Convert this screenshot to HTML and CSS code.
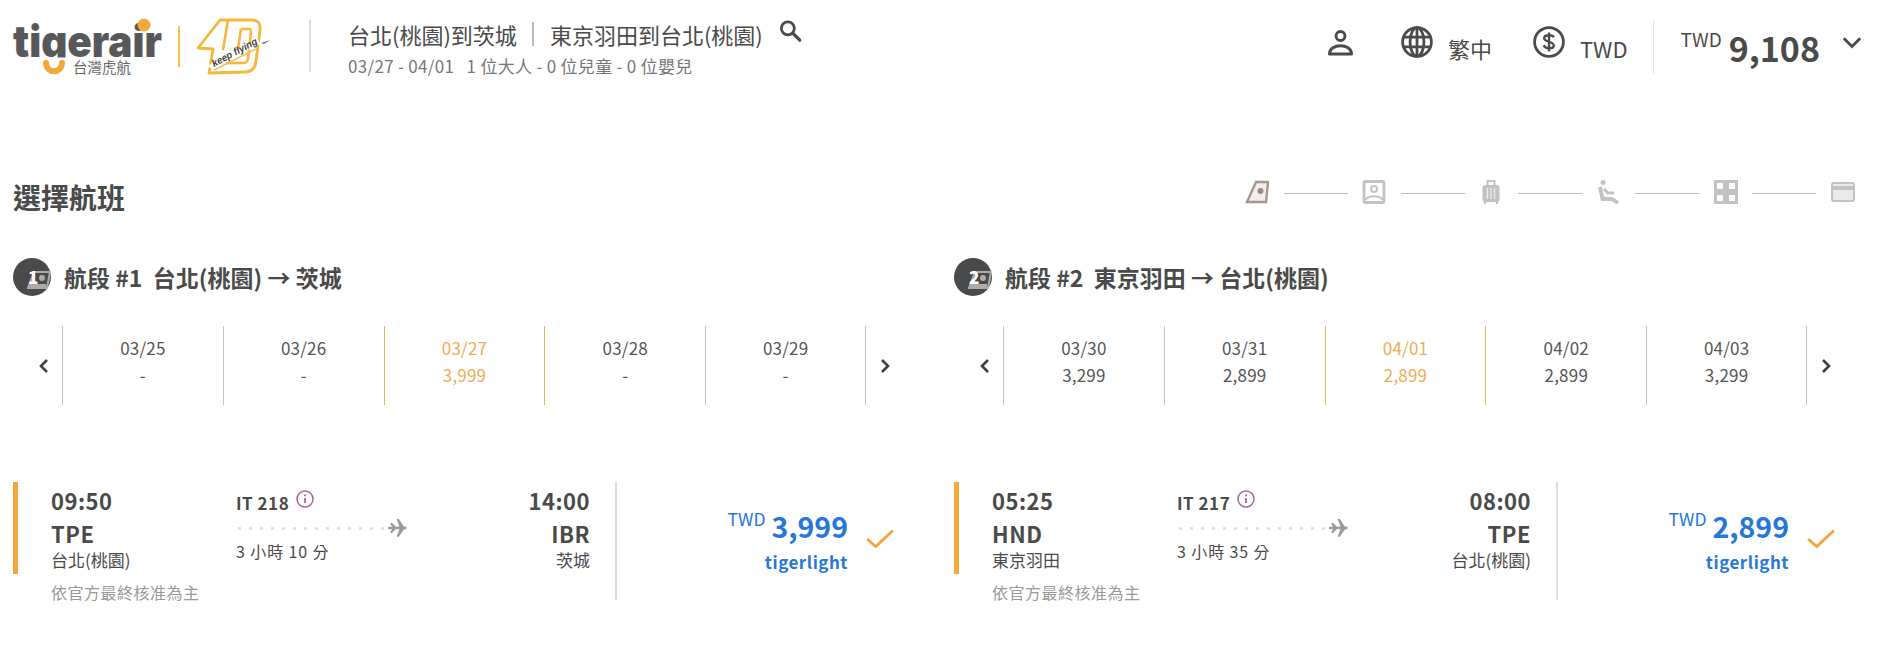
FILE: index.html
```html
<!DOCTYPE html>
<html lang="zh-Hant">
  <head>
    <meta charset="utf-8">
    <title>選擇航班</title>
    <link rel="stylesheet" href="styles.css">
  </head>
  <body>
    <header class="top-bar">
      <svg class="logo" viewBox="10 10 270 70" width="270" height="70">
        <text class="logo-word" x="13" y="57" textLength="149" lengthAdjust="spacingAndGlyphs">tigerair</text>
        <circle cx="144" cy="25" r="6.5" fill="#f5a63a"></circle>
        <rect x="40" y="57.500" width="30" height="18" fill="#fff"></rect>
        <path d="M46 63c1 11 15 11 16 0" fill="none" stroke="#f5a63a" stroke-width="6" stroke-linecap="round"></path>
        <text class="logo-sub" x="73" y="73">台灣虎航</text>
        <rect x="178" y="26" width="2" height="41" fill="#f5c04a"></rect>
        <path d="M198 48 220 20h32q9 0 8 10l-4 31q-1 11-11 11l-36 1 4-24z" fill="none" stroke="#f5b83c" stroke-width="2.800" stroke-linejoin="round"></path>
        <path d="M241 29h8q2 0 2 3l-3 27q-1 4-5 4h-17" fill="none" stroke="#f5b83c" stroke-width="2.600"></path>
        <path d="M241 29 237 55M228 20l-5 30" fill="none" stroke="#f5b83c" stroke-width="2.600"></path>
        <path d="M207 66 258 39l2 5-48 25z" fill="#fff"></path>
        <path d="M214 70 256 49" stroke="#f5c04a" stroke-width="1.500"></path>
        <text class="logo-tag" transform="translate(214 67) rotate(-28)" textLength="50" lengthAdjust="spacingAndGlyphs">keep flying</text>
        <path d="M261 43l9-3-3 2-3 2z" fill="#777"></path>
      </svg>
      <div class="route">
        <h1 class="route-title"><span>台北(桃園)到茨城</span><i class="route-sep"></i><span>東京羽田到台北(桃園)</span>
          <svg class="route-search" viewBox="0 0 24 24" width="26" height="26"><circle cx="10" cy="9.500" r="6" fill="none" stroke="#4a4a4a" stroke-width="2.600"></circle><path d="M14.500 14 21 20.500" stroke="#4a4a4a" stroke-width="3" stroke-linecap="round"></path></svg>
        </h1>
        <p class="route-sub">03/27 - 04/01&nbsp;&nbsp; 1 位大人 - 0 位兒童 - 0 位嬰兒</p>
      </div>
      <nav class="top-nav">
        <svg class="nav-user" viewBox="0 0 26 28" width="27" height="28"><circle cx="13" cy="7" r="4.500" fill="none" stroke="#4a4a4a" stroke-width="2.800"></circle><path d="M2 25c0-11 22-11 22 0z" fill="none" stroke="#4a4a4a" stroke-width="3" stroke-linejoin="round"></path></svg>
        <div class="nav-item nav-lang">
          <svg viewBox="0 0 30 30" width="32" height="32"><g fill="none" stroke="#4a4a4a" stroke-width="2.600"><circle cx="15" cy="15" r="13.500"></circle><ellipse cx="15" cy="15" rx="6.500" ry="13.500"></ellipse><path d="M2.500 10.500h25M2.500 19.500h25M15 2v26"></path></g></svg>
          <span>繁中</span>
        </div>
        <div class="nav-item nav-currency">
          <svg viewBox="0 0 30 30" width="32" height="32"><circle cx="15" cy="15" r="13.500" fill="none" stroke="#4a4a4a" stroke-width="2.600"></circle><path d="M19.500 10.500c-1-2-8-3-9 .5-1 4.500 9.500 3 9 7.500-.5 3.500-8 3-9.500-.5M15 6v18" fill="none" stroke="#4a4a4a" stroke-width="2.200"></path></svg>
          <span>TWD</span>
        </div>
        <div class="nav-total">
          <sup>TWD</sup><strong>9,108</strong>
          <svg viewBox="0 0 18 12" width="22" height="14"><path d="M2 2l7 7 7-7" fill="none" stroke="#4a4a4a" stroke-width="2.400"></path></svg>
        </div>
      </nav>
    </header>

    <div class="page-head">
      <h2>選擇航班</h2>
      <div class="stepper">
        <svg viewBox="0 0 24 24" width="24" height="24"><path d="M11 2h12l-2 20H1z" fill="#f1eeec"></path><path d="M21 22H2L11 2h12z" fill="none" stroke="#a5978f" stroke-width="2.400"></path><circle cx="15.500" cy="11" r="3" fill="#9a8a80"></circle></svg>
        <i></i>
        <svg viewBox="0 0 24 24" width="24" height="24"><rect x="2" y="1.500" width="20" height="21" rx="1" fill="none" stroke="#c2c2c2" stroke-width="2.800"></rect><circle cx="12" cy="9" r="3" fill="none" stroke="#c2c2c2" stroke-width="2"></circle><path d="M3 20c4-5 14-5 18 0" fill="none" stroke="#c2c2c2" stroke-width="2"></path></svg>
        <i></i>
        <svg viewBox="0 0 24 24" width="24" height="24"><path d="M8.500 5V1h7v4" fill="none" stroke="#c2c2c2" stroke-width="2"></path><rect x="3.500" y="5" width="17" height="17" rx="2.500" fill="#c2c2c2"></rect><path d="M8.500 8v11M12 8v11M15.500 8v11" stroke="#eee" stroke-width="1.300"></path><path d="M6 22v2M18 22v2" stroke="#c2c2c2" stroke-width="2"></path></svg>
        <i></i>
        <svg viewBox="0 0 24 24" width="24" height="24"><circle cx="6" cy="2.500" r="2.500" fill="#c2c2c2"></circle><path d="M3 7l2.500 12h9.500l6 4" fill="none" stroke="#c2c2c2" stroke-width="3.800"></path><path d="M7 9l4 4h6" fill="none" stroke="#c2c2c2" stroke-width="3"></path></svg>
        <i></i>
        <svg viewBox="0 0 24 24" width="24" height="24"><path d="M1.500 1.500h9v9h-9zM13.500 1.500h9v9h-9zM1.500 13.500h9v9h-9zM13.500 13.500h9v9h-9z" fill="#fff" stroke="#c2c2c2" stroke-width="3"></path></svg>
        <i></i>
        <svg viewBox="0 0 24 24" width="24" height="24"><rect x="1" y="3" width="22" height="18" rx="2" fill="#eaeaea" stroke="#c2c2c2" stroke-width="2"></rect><rect x="1" y="6" width="22" height="4" fill="#c2c2c2"></rect></svg>
      </div>
    </div>

    <main class="legs">
      <section class="leg">
        <h3 class="leg-title">
          <span class="leg-badge"><svg viewBox="0 0 24 20" width="24" height="20"><path d="M7 1h16l-3 16H1z" fill="none" stroke="#bdbdbd" stroke-width="2"></path><path d="M3 13 19 13v4H2z" fill="#bdbdbd"></path><circle cx="15" cy="7" r="3" fill="#bdbdbd"></circle></svg><b>1</b></span>
          <span>航段 #1&nbsp; 台北(桃園) → 茨城</span>
        </h3>
        <div class="dates">
          <svg class="date-arrow" viewBox="0 0 10 16" width="10" height="16"><path d="M8 2 2 8l6 6" fill="none" stroke="#3f3f3f" stroke-width="2.600"></path></svg>
          <div class="date-cell"><span>03/25</span><span>-</span></div>
          <div class="date-cell"><span>03/26</span><span>-</span></div>
          <div class="date-cell is-active"><span>03/27</span><span>3,999</span></div>
          <div class="date-cell after-active"><span>03/28</span><span>-</span></div>
          <div class="date-cell"><span>03/29</span><span>-</span></div>
          <svg class="date-arrow" viewBox="0 0 10 16" width="10" height="16"><path d="M2 2l6 6-6 6" fill="none" stroke="#3f3f3f" stroke-width="2.600"></path></svg>
        </div>
        <article class="flight">
          <div class="flight-info">
            <div class="flight-from">
              <b>09:50</b>
              <b>TPE</b>
              <span>台北(桃園)</span>
              <small>依官方最終核准為主</small>
            </div>
            <div class="flight-mid">
              <div class="flight-no"><b>IT 218</b><svg viewBox="0 0 18 18" width="18" height="18"><circle cx="9" cy="9" r="8" fill="none" stroke="#a9649b" stroke-width="1.500"></circle><path d="M9 8v5M9 4.500v1.800" stroke="#a9649b" stroke-width="1.800"></path></svg></div>
              <div class="flight-line"><i></i><svg viewBox="0 0 20 20" width="20" height="20"><path d="M1 9l4-.2L3 5h2l4 3.700 3.500-.2L9.500 1h2.300l5 7.400 2 .1c1 .3 1 2.500 0 2.800l-2 .1-5 7.300H9.500l3-7.500-3.500-.2L5 15H3l2-3.800-4-.2z" fill="#9a9a9a"></path></svg></div>
              <span>3 小時 10 分</span>
            </div>
            <div class="flight-to">
              <b>14:00</b>
              <b>IBR</b>
              <span>茨城</span>
            </div>
          </div>
          <div class="flight-fare">
            <div class="fare-text">
              <div class="fare-price"><sup>TWD</sup><strong>3,999</strong></div>
              <b>tigerlight</b>
            </div>
            <svg viewBox="0 0 28 20" width="30" height="22"><path d="M2 10l8 7L26 2" fill="none" stroke="#f5a63a" stroke-width="2.600"></path></svg>
          </div>
        </article>
      </section>

      <section class="leg">
        <h3 class="leg-title">
          <span class="leg-badge"><svg viewBox="0 0 24 20" width="24" height="20"><path d="M7 1h16l-3 16H1z" fill="none" stroke="#bdbdbd" stroke-width="2"></path><path d="M3 13 19 13v4H2z" fill="#bdbdbd"></path><circle cx="15" cy="7" r="3" fill="#bdbdbd"></circle></svg><b>2</b></span>
          <span>航段 #2&nbsp; 東京羽田 → 台北(桃園)</span>
        </h3>
        <div class="dates">
          <svg class="date-arrow" viewBox="0 0 10 16" width="10" height="16"><path d="M8 2 2 8l6 6" fill="none" stroke="#3f3f3f" stroke-width="2.600"></path></svg>
          <div class="date-cell"><span>03/30</span><span>3,299</span></div>
          <div class="date-cell"><span>03/31</span><span>2,899</span></div>
          <div class="date-cell is-active"><span>04/01</span><span>2,899</span></div>
          <div class="date-cell after-active"><span>04/02</span><span>2,899</span></div>
          <div class="date-cell"><span>04/03</span><span>3,299</span></div>
          <svg class="date-arrow" viewBox="0 0 10 16" width="10" height="16"><path d="M2 2l6 6-6 6" fill="none" stroke="#3f3f3f" stroke-width="2.600"></path></svg>
        </div>
        <article class="flight">
          <div class="flight-info">
            <div class="flight-from">
              <b>05:25</b>
              <b>HND</b>
              <span>東京羽田</span>
              <small>依官方最終核准為主</small>
            </div>
            <div class="flight-mid">
              <div class="flight-no"><b>IT 217</b><svg viewBox="0 0 18 18" width="18" height="18"><circle cx="9" cy="9" r="8" fill="none" stroke="#a9649b" stroke-width="1.500"></circle><path d="M9 8v5M9 4.500v1.800" stroke="#a9649b" stroke-width="1.800"></path></svg></div>
              <div class="flight-line"><i></i><svg viewBox="0 0 20 20" width="20" height="20"><path d="M1 9l4-.2L3 5h2l4 3.700 3.500-.2L9.500 1h2.300l5 7.400 2 .1c1 .3 1 2.500 0 2.800l-2 .1-5 7.300H9.500l3-7.500-3.500-.2L5 15H3l2-3.800-4-.2z" fill="#9a9a9a"></path></svg></div>
              <span>3 小時 35 分</span>
            </div>
            <div class="flight-to">
              <b>08:00</b>
              <b>TPE</b>
              <span>台北(桃園)</span>
            </div>
          </div>
          <div class="flight-fare">
            <div class="fare-text">
              <div class="fare-price"><sup>TWD</sup><strong>2,899</strong></div>
              <b>tigerlight</b>
            </div>
            <svg viewBox="0 0 28 20" width="30" height="22"><path d="M2 10l8 7L26 2" fill="none" stroke="#f5a63a" stroke-width="2.600"></path></svg>
          </div>
        </article>
      </section>
    </main>
  </body>
</html>
```

FILE: styles.css
```css
* {
  box-sizing: border-box;
}
body {
  margin: 0;
  background: #fff;
  color: #4a4a4a;
  font-family: "Noto Sans CJK TC", "Noto Sans", sans-serif;
  overflow: hidden;
}
h1, h2, h3, p {
  margin: 0;
}

/* top bar */
.top-bar {
  display: flex;
  height: 90px;
  padding: 10px 0 0 10px;
}
.logo {
  flex: none;
}
.logo-word {
  font-family: Inter, sans-serif;
  font-weight: 900;
  font-size: 44px;
  fill: #58585a;
}
.logo-sub {
  font-size: 14.5px;
  fill: #666;
}
.logo-tag {
  font-family: "Liberation Sans", sans-serif;
  font-style: italic;
  font-weight: 700;
  font-size: 10px;
  fill: #444;
}
.route {
  margin-left: 29px;
  margin-top: 10px;
  height: 52px;
  border-left: 2px solid #ddd;
  padding-left: 37px;
}
.route-title {
  display: flex;
  align-items: center;
  font-size: 22px;
  font-weight: 400;
  line-height: 30px;
  margin-top: -1px;
  color: #4a4a4a;
}
.route-sep {
  width: 2px;
  height: 24px;
  background: #bbb;
  margin: 0 16px 0 15px;
}
.route-search {
  margin: -7px 0 0 14px;
}
.route-sub {
  font-size: 17px;
  line-height: 24px;
  color: #777;
  margin-top: 5px;
  letter-spacing: 0.3px;
}
.top-nav {
  margin-left: auto;
  display: flex;
  align-items: flex-start;
  height: 58px;
  margin-top: 6px;
  margin-right: 14px;
}
.nav-user {
  margin-top: 13px;
}
.nav-item {
  display: flex;
  align-items: flex-start;
  margin-top: 10px;
}
.nav-item span {
  font-size: 22px;
  line-height: 28px;
  margin-top: 8px;
}
.nav-lang {
  margin-left: 47px;
}
.nav-lang span {
  margin-left: 15px;
}
.nav-currency {
  margin-left: 41px;
}
.nav-currency span {
  margin-left: 15px;
}
.nav-total {
  display: flex;
  align-items: flex-start;
  margin: 4px 0 0 25px;
  padding-left: 27px;
  height: 54px;
  border-left: 1px solid #e2e2e2;
}
.nav-total sup {
  font-size: 19px;
  line-height: 20px;
  margin-top: 9px;
}
.nav-total strong {
  font-size: 34px;
  line-height: 44px;
  font-weight: 700;
  margin: 6px 0 0 7px;
}
.nav-total svg {
  margin: 16px 0 0 21px;
}

/* page heading and stepper */
.page-head {
  display: flex;
  justify-content: space-between;
  align-items: center;
  height: 50px;
  margin-top: 82px;
  padding: 0 22px 0 13px;
}
.page-head h2 {
  font-size: 28px;
  font-weight: 700;
  line-height: 40px;
}
.stepper {
  display: flex;
  align-items: center;
  gap: 14.6px;
  margin-top: -10px;
}
.stepper i {
  width: 64px;
  height: 1px;
  margin-top: 2px;
  background: #bbb;
}

/* two legs */
.legs {
  display: grid;
  grid-template-columns: 910px 910px;
  gap: 31px;
  padding: 0 13px;
}
.leg-title {
  display: flex;
  align-items: center;
  gap: 13px;
  height: 38px;
  margin-top: 36px;
  font-size: 23px;
  font-weight: 700;
}
.leg-badge {
  position: relative;
  flex: none;
  width: 38px;
  height: 38px;
  border-radius: 50%;
  background: #4a4a4a;
  color: #fff;
  font-size: 17px;
  line-height: 38px;
  padding-left: 15px;
}
.leg-badge svg {
  position: absolute;
  left: 14px;
  top: 13px;
  opacity: 0.85;
}
.leg-badge b {
  position: relative;
}

/* date strip */
.dates {
  display: flex;
  align-items: center;
  height: 79px;
  margin-top: 30px;
}
.date-arrow {
  flex: none;
  margin: 0 13px 0 26px;
}
.date-arrow:last-child {
  margin: 0 0 0 14px;
}
.date-cell {
  width: 160.8px;
  height: 79px;
  border-left: 1px solid #c4c4c4;
  display: flex;
  flex-direction: column;
  align-items: center;
  padding-top: 8px;
  font-size: 17px;
  line-height: 27px;
  letter-spacing: 0.2px;
  color: #555;
}
.date-cell:nth-last-child(2) {
  border-right: 1px solid #c4c4c4;
}
.date-cell.is-active {
  border-left-color: #eab35f;
  color: #f2ab55;
}
.date-cell.after-active {
  border-left-color: #eab35f;
}

/* flight card */
.flight {
  display: flex;
  margin-top: 41px;
  padding: 36px 0;
  height: 190px;
  border-radius: 8px;
  box-shadow: 0 0 3px rgba(0, 0, 0, 0.02);
}
.flight::before {
  content: "";
  width: 5px;
  height: 92px;
  background: #f5a63a;
  flex: none;
}
.flight-info {
  display: flex;
  width: 599px;
  height: 118px;
  padding: 0 25px 0 33px;
  border-right: 2px solid #ddd;
}
.flight-from, .flight-to {
  display: flex;
  flex-direction: column;
  padding-top: 2px;
  font-size: 17px;
}
.flight-from {
  width: 185px;
}
.flight-to {
  flex: 1;
  align-items: flex-end;
}
.flight-from b, .flight-to b {
  font-size: 22px;
  line-height: 33px;
  letter-spacing: 0.5px;
}
.flight-from span, .flight-to span {
  line-height: 20px;
}
.flight-from small {
  font-size: 16px;
  line-height: 24px;
  margin-top: 10px;
  letter-spacing: 0.5px;
  color: #999;
}
.flight-mid {
  width: 172px;
  padding-top: 5px;
  font-size: 16px;
  letter-spacing: 0.9px;
}
.flight-no {
  display: flex;
  align-items: flex-start;
  gap: 7px;
  height: 31px;
  letter-spacing: 0.5px;
}
.flight-no b {
  font-size: 17px;
  line-height: 32px;
}
.flight-no svg {
  margin-top: 3px;
}
.flight-line {
  display: flex;
  align-items: center;
  height: 20px;
  padding-right: 1px;
}
.flight-line i {
  flex: 1;
  margin-left: 2px;
  height: 3px;
  background: repeating-linear-gradient(90deg, #e0e0e0 0 3px, transparent 3px 11px);
}
.flight-line svg {
  flex: none;
}
.flight-mid > span {
  display: block;
  line-height: 24px;
  margin-top: 1px;
}
.flight-fare {
  flex: 1;
  display: flex;
  align-items: flex-start;
  padding-left: 112px;
}
.fare-text {
  display: flex;
  flex-direction: column;
  align-items: flex-end;
  width: 119px;
  margin-top: 25px;
  color: #2577d9;
}
.fare-price {
  display: flex;
  align-items: flex-start;
}
.fare-price sup {
  font-size: 17.5px;
  line-height: 20px;
  margin-top: 2px;
}
.fare-price strong {
  font-size: 28.5px;
  line-height: 40px;
  font-weight: 700;
  margin: -1px 0 0 6px;
}
.fare-text > b {
  font-size: 17px;
  line-height: 26px;
  letter-spacing: 0.5px;
  margin-top: 3px;
}
.flight-fare > svg {
  margin: 46px 0 0 17px;
}
```
